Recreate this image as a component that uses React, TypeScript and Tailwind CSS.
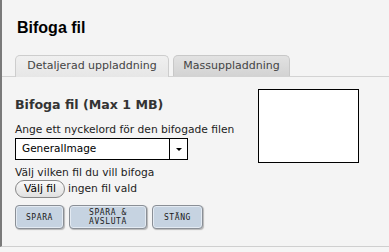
import React from "react";

const V = { fontFamily: '"DejaVu Sans", Verdana, sans-serif' };

function Btn({ children }: { children: React.ReactNode }) {
  return (
    <button
      className="w-full h-full flex items-center justify-center rounded-[4px] border border-[#8a8f96] bg-[#c6d3e1] text-[8px] leading-[9px] tracking-[0.6px] text-[#1a1a1a] shadow-[inset_0_0_0_1px_#e3eaf2,1px_1px_1px_#b8b8b8] text-center"
      style={{ fontFamily: '"DejaVu Sans Mono", monospace' }}
    >
      {children}
    </button>
  );
}

export default function App() {
  return (
    <div className="w-[389px] h-[252px] bg-[#f5f5f5] overflow-hidden relative">
      <div className="h-[247px] border-l-2 border-[#7a7a7a] border-b border-b-[#cfcfcf] bg-[#f4f4f4]">
        <div
          className="pt-[18px] pl-[15px] text-[16px] font-bold text-black leading-[20px]"
          style={{ fontFamily: '"Liberation Sans", Arial, sans-serif' }}
        >
          Bifoga fil
        </div>
        <div className="mt-[17px] flex items-end gap-[4px] pl-[13px] border-b border-[#d3d3d3] h-[22px]">
          <div
            className="h-[22px] w-[154px] rounded-t-[5px] border border-b-0 border-[#cdcdcd] bg-gradient-to-b from-[#f0f0f0] to-[#e6e6e6] flex items-center justify-center text-[11px] text-[#444] -mb-px"
            style={V}
          >
            Detaljerad uppladdning
          </div>
          <div
            className="h-[21px] w-[117px] rounded-t-[5px] border border-b-0 border-[#c8c8c8] bg-gradient-to-b from-[#e2e2e2] to-[#d3d3d3] flex items-center justify-center text-[11px] text-[#444]"
            style={V}
          >
            Massuppladdning
          </div>
        </div>
        <div className="flex pl-[13px] pt-[12px]">
          <div className="w-[243px]" style={V}>
            <div className="mt-[8px] text-[12.6px] font-bold text-[#333] leading-[16px]">
              Bifoga fil (Max 1 MB)
            </div>
            <div className="mt-[10px] text-[10.7px] text-[#222] leading-[13px] whitespace-nowrap">
              Ange ett nyckelord för den bifogade filen
            </div>
            <div className="mt-[2px] w-[173px] h-[22px] border border-black bg-white flex items-center text-[10.5px] text-black">
              <span className="flex-1 pl-[6px]">GeneralImage</span>
              <span className="w-[18px] h-full border-l border-black flex items-center justify-center">
                <span className="block w-0 h-0 border-l-[3px] border-r-[3px] border-t-[3px] border-l-transparent border-r-transparent border-t-black" />
              </span>
            </div>
            <div className="mt-[6px] text-[10.7px] text-[#222] leading-[13px]">
              Välj vilken fil du vill bifoga
            </div>
            <div className="mt-[1px] flex items-center gap-[3px] text-[10.7px] text-[#222]">
              <span className="h-[18px] w-[50px] rounded-full border border-[#888] bg-gradient-to-b from-[#fafafa] to-[#e0e0e0] flex items-center justify-center text-black">
                Välj fil
              </span>
              <span>ingen fil vald</span>
            </div>
            <div className="mt-[7px] flex gap-[5px]">
              <div className="w-[49px] h-[24px] flex"><Btn>SPARA</Btn></div>
              <div className="w-[78px] h-[24px] flex"><Btn>SPARA &amp;<br />AVSLUTA</Btn></div>
              <div className="w-[51px] h-[24px] flex"><Btn>STÄNG</Btn></div>
            </div>
          </div>
          <div className="w-[101px] h-[74px] border border-black bg-white" />
        </div>
      </div>
    </div>
  );
}
